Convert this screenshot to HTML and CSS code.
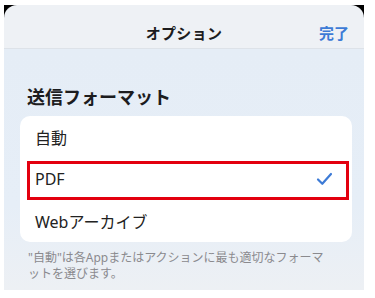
FILE: index.html
```html
<!DOCTYPE html>
<html lang="ja">
<head>
<meta charset="utf-8">
<title>オプション</title>
<link rel="stylesheet" href="styles.css">
</head>
<body>
<div class="frame">
  <div class="sheet">
    <header class="nav">
      <span class="nav-title">オプション</span>
      <span class="nav-done">完了</span>
    </header>
    <section class="group">
      <h2 class="group-title">送信フォーマット</h2>
      <ul class="list">
        <li class="row">自動</li>
        <li class="row row-selected">PDF
          <svg class="check" width="17" height="14" viewBox="0 0 17 14"><path d="M2 7.5 L6.3 11.8 L15 2" fill="none" stroke="#3d7bd6" stroke-width="2.2" stroke-linecap="round" stroke-linejoin="round"/></svg>
        </li>
        <li class="row">Webアーカイブ</li>
      </ul>
      <p class="footer"><span class="line">"自動"は各Appまたはアクションに最も適切なフォーマ</span><span class="line">ットを選びます。</span></p>
    </section>
  </div>
</div>
</body>
</html>
```

FILE: styles.css
```css
* { box-sizing: border-box; }
html, body { margin: 0; padding: 0; background: #ffffff; }
body {
  font-family: "Noto Sans", "Noto Sans CJK JP", sans-serif;
  color: #1c1c1e;
}
.frame {
  margin: 5px 11px 0 4px;
  height: 285px;
  background: #000;
}
.sheet {
  height: 285px;
  border-radius: 13px 13px 0 0;
  background: linear-gradient(180deg, #eef1f5 0px, #eef1f5 43px, #e5edf6 44px, #e6eef7 200px, #edf0f4 285px);
  overflow: hidden;
}
.nav {
  height: 44px;
  border-bottom: 1px solid #dde2e8;
  position: relative;
  display: flex;
  align-items: flex-start;
  justify-content: center;
  padding-top: 17px;
}
.nav-title {
  font-size: 15px;
  line-height: 22px;
  font-weight: 700;
  letter-spacing: 0.3px;
  color: #1c1c1e;
}
.nav-done {
  position: absolute;
  right: 15px;
  top: 17px;
  font-size: 15px;
  line-height: 22px;
  font-weight: 700;
  color: #3d7bd6;
}
.group {
  padding: 36px 12px 0 16px;
}
.group-title {
  margin: 0 0 7px 7px;
  font-size: 18px;
  line-height: 24px;
  font-weight: 700;
  color: #1c1c1e;
}
.list {
  list-style: none;
  margin: 0;
  padding: 0;
  background: #ffffff;
  border-radius: 10px;
}
.row {
  height: 42px;
  display: flex;
  align-items: center;
  justify-content: space-between;
  padding: 0 19px 0 15px;
  font-size: 16px;
  color: #222222;
  position: relative;
}
.row-selected::after {
  content: "";
  position: absolute;
  left: 7px;
  right: 3px;
  top: 3px;
  bottom: 0;
  border: 3px solid #e3000f;
}
.check { display: block; }
.footer {
  margin: 8px 0 0 8px;
  font-size: 12px;
  line-height: 16px;
  color: #8a8a8e;
}
.line {
  display: block;
  white-space: nowrap;
}
```
